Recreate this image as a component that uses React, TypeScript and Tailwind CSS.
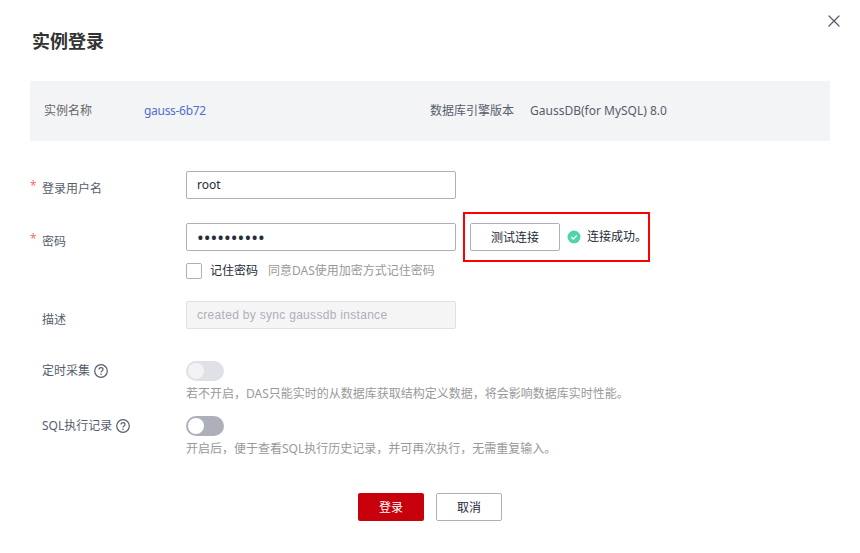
import { X } from "lucide-react";

const font = { fontFamily: '"Noto Sans", "Noto Sans CJK SC", sans-serif' };

const Help = () => (
  <svg width="14" height="14" viewBox="0 0 14 14" fill="none" className="ml-1 shrink-0">
    <circle cx="7" cy="7" r="6.3" stroke="#575d6c" strokeWidth="1.2" />
    <path d="M5 5.6c0-1.1.9-1.9 2-1.9s2 .8 2 1.8c0 1.5-2 1.4-2 2.9" stroke="#575d6c" strokeWidth="1.2" />
    <circle cx="7" cy="10.3" r=".8" fill="#575d6c" />
  </svg>
);

const Toggle = ({ disabled }: { disabled?: boolean }) => (
  <div
    className={`flex h-5 w-[38px] items-center rounded-full pl-0.5 ${disabled ? "bg-[#dfe1e6]" : "bg-[#adb0b8]"}`}
  >
    <div className={`h-4 w-4 rounded-full ${disabled ? "bg-[#f3f3f5]" : "bg-white"}`} />
  </div>
);

const Label = ({ text, required }: { text: string; required?: boolean }) => (
  <div className="flex w-[156px] shrink-0 text-xs leading-4 text-[#575d6c]">
    <span className="-mt-[3px] w-3 text-[#f66f6a]">{required ? "*" : ""}</span>
    <span>{text}</span>
  </div>
);

const inputCls =
  "h-7 w-[270px] rounded-[2px] border border-[#adb0b8] bg-white px-[10px] text-[#252b3a] outline-none";

export default function App() {
  return (
    <div className="relative h-[553px] w-[860px] overflow-hidden bg-white" style={font}>
      <button className="absolute right-4 top-[11px] text-[#575d6c]">
        <X size={20} strokeWidth={1.5} />
      </button>

      <div className="px-[30px] pt-[28px]">
        <h1 className="pl-0.5 text-lg leading-[26px] font-bold text-[#333]">实例登录</h1>

        <div className="mt-[27px] flex h-[60px] w-[800px] items-center bg-[#f3f4f6] pl-[14px] text-xs">
          <span className="w-[100px] text-[#666]">实例名称</span>
          <a className="w-[286px] tracking-[-0.3px] text-[#526ecc]">gauss-6b72</a>
          <span className="w-[100px] text-[#575d6c]">数据库引擎版本</span>
          <span className="text-[#575d6c]">GaussDB(for MySQL) 8.0</span>
        </div>

        <div className="mt-[30px] flex">
          <div className="pt-2.5">
            <Label text="登录用户名" required />
          </div>
          <input readOnly value="root" className={`${inputCls} pb-0.5 text-xs`} />
        </div>

        <div className="mt-6 flex">
          <div className="pt-[11px]">
            <Label text="密码" required />
          </div>
          <div>
            <div className="flex items-center">
              <input readOnly type="password" value="1234567890" className={`${inputCls} text-lg`} />
              <button className="ml-[14px] h-7 w-[90px] rounded-[2px] border border-[#adb0b8] pt-0.5 text-xs text-[#252b3a]">
                测试连接
              </button>
              <svg width="14" height="14" viewBox="0 0 14 14" className="ml-[7px]">
                <circle cx="7" cy="7" r="6.5" fill="#50d4ab" />
                <path d="M4.2 7l2 2 3.6-3.6" fill="none" stroke="#fff" strokeWidth="1.3" />
              </svg>
              <span className="ml-[6px] text-xs text-[#252b3a]">连接成功。</span>
            </div>
            <div className="mt-3 flex h-4 items-center">
              <span className="h-4 w-4 rounded-[2px] border border-[#adb0b8]" />
              <span className="ml-2 text-xs text-[#252b3a]">记住密码</span>
              <span className="ml-[10px] text-xs text-[#999]">同意DAS使用加密方式记住密码</span>
            </div>
          </div>
        </div>

        <div className="mt-[22px] flex">
          <div className="pt-[11px]">
            <Label text="描述" />
          </div>
          <input
            readOnly
            value="created by sync gaussdb instance"
            className="h-7 w-[270px] rounded-[2px] border border-[#dfe1e6] bg-[#f5f5f6] px-[10px] text-xs tracking-[0.3px] text-[#adb0b8] outline-none"
            style={{ fontFamily: '"Liberation Sans", sans-serif' }}
          />
        </div>

        <div className="mt-8 flex">
          <div className="flex h-5 w-[156px] shrink-0 items-center pl-3 text-xs leading-4 text-[#575d6c]">
            定时采集
            <Help />
          </div>
          <div>
            <Toggle disabled />
            <p className="mt-[5px] text-xs leading-4 text-[#999]">
              若不开启，DAS只能实时的从数据库获取结构定义数据，将会影响数据库实时性能。
            </p>
          </div>
        </div>

        <div className="mt-3.5 flex">
          <div className="flex h-5 w-[156px] shrink-0 items-center pl-3 text-xs leading-4 text-[#575d6c]">
            SQL执行记录
            <Help />
          </div>
          <div>
            <Toggle />
            <p className="mt-[5px] text-xs leading-4 text-[#999]">
              开启后，便于查看SQL执行历史记录，并可再次执行，无需重复输入。
            </p>
          </div>
        </div>

        <div className="mt-9 flex justify-center gap-3">
          <button className="h-7 w-[66px] rounded-[2px] bg-[#c7000b] pt-0.5 text-xs text-white">登录</button>
          <button className="h-7 w-[66px] rounded-[2px] border border-[#adb0b8] pt-0.5 text-xs text-[#252b3a]">
            取消
          </button>
        </div>
      </div>

      <div className="absolute left-[463px] top-[212px] h-[50px] w-[187px] border-2 border-[#f00]" />
    </div>
  );
}
